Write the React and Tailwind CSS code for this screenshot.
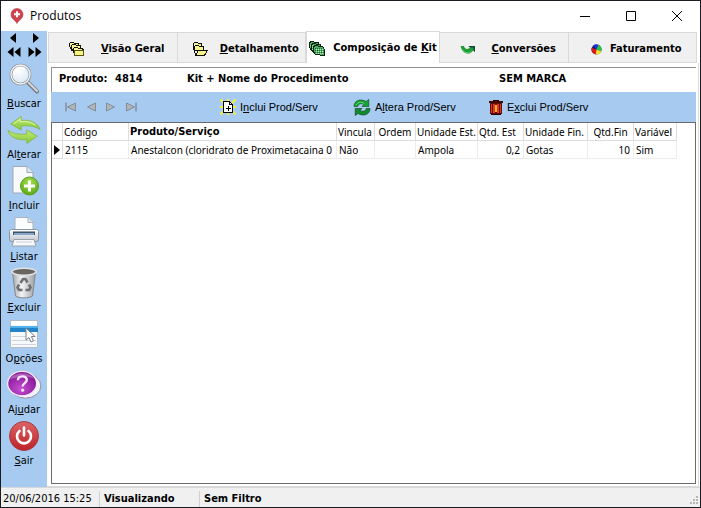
import React from "react";

/* ---------- icons ---------- */

function PinIcon() {
  return (
    <svg width="14" height="16" viewBox="0 0 14 16" aria-hidden="true">
      <path d="M7 15.500C6 12.500 1 11 1 6.500a6 6 0 0 1 12 0C13 11 8 12.500 7 15.500Z" fill="#cf4350" stroke="#b5323f" strokeWidth=".6" />
      <path d="M7 3.200v6M4 6.200h6" stroke="#fff" strokeWidth="2" />
    </svg>
  );
}

function SearchIcon() {
  return (
    <svg width="32" height="32" viewBox="0 0 32 32" aria-hidden="true">
      <defs>
        <radialGradient id="lens" cx=".4" cy=".35" r=".7">
          <stop offset="0" stopColor="#fff" />
          <stop offset="1" stopColor="#d5e6f5" />
        </radialGradient>
      </defs>
      <path d="M20 19.500 29 28.500" stroke="#777b80" strokeWidth="4" strokeLinecap="round" />
      <path d="M20 19 29 28" stroke="#d5d8db" strokeWidth="2" strokeLinecap="round" />
      <circle cx="12.500" cy="11.500" r="9.500" fill="url(#lens)" stroke="#8b8f94" strokeWidth="2.600" />
      <circle cx="12.500" cy="11.500" r="9.500" fill="none" stroke="#f0f1f2" strokeWidth="1.400" />
      <path d="M6 10c1-4 6-6 10-4" stroke="#fff" strokeWidth="2" fill="none" strokeLinecap="round" />
    </svg>
  );
}

function SwapIcon() {
  return (
    <svg width="34" height="28" viewBox="0 0 36 32" preserveAspectRatio="none" aria-hidden="true">
      <defs>
        <linearGradient id="leaf" x1="0" y1="0" x2="0" y2="1">
          <stop offset="0" stopColor="#c3ea78" />
          <stop offset="1" stopColor="#86c834" />
        </linearGradient>
      </defs>
      <path d="M4 9 15 .5v4.500c9-1 17 2 20 10.500-6-4-12-5-20-4V16Z" fill="url(#leaf)" stroke="#7bb53a" strokeWidth=".8" />
      <path d="M32 23 21 31.500V27C12 28 3 25 1 16.500c6 4 12 5 20 4V16Z" fill="url(#leaf)" stroke="#7bb53a" strokeWidth=".8" />
      <path d="M7 9 14 3.800v2.700c7-.8 12 .5 16 4" fill="none" stroke="#e2f7b8" strokeWidth="1" />
    </svg>
  );
}

function AddPageIcon() {
  return (
    <svg width="32" height="32" viewBox="0 0 32 32" aria-hidden="true">
      <defs>
        <radialGradient id="plus" cx=".5" cy=".3" r=".7">
          <stop offset="0" stopColor="#a8df4b" />
          <stop offset="1" stopColor="#59a817" />
        </radialGradient>
      </defs>
      <path d="M5 1.500h14l6 6V28H5Z" fill="#f8fafc" stroke="#9fa9b3" />
      <path d="M19 1.500v6h6" fill="#dfe6ec" stroke="#9fa9b3" />
      <circle cx="21.500" cy="21" r="9" fill="url(#plus)" stroke="#5c9e22" />
      <path d="M21.500 15.500v11M16 21h11" stroke="#fff" strokeWidth="3" />
    </svg>
  );
}

function PrinterIcon() {
  return (
    <svg width="32" height="32" viewBox="0 0 32 32" aria-hidden="true">
      <defs>
        <linearGradient id="prn" x1="0" y1="0" x2="0" y2="1">
          <stop offset="0" stopColor="#fff" />
          <stop offset="1" stopColor="#bfc6cc" />
        </linearGradient>
      </defs>
      <path d="M7 16V1.500h13l5 5V16Z" fill="#fbfcfd" stroke="#aab2ba" />
      <path d="M20 1.500v5h5" fill="#dde4ea" stroke="#aab2ba" />
      <rect x="1.500" y="13.500" width="29" height="12" rx="2" fill="url(#prn)" stroke="#8d97a1" />
      <path d="M5 15.500h22v3.500H5Z" fill="#3f5166" />
      <path d="M6 19h20v-2H6Z" fill="#88a7c8" />
      <path d="M6 23.500h20l2 6.500H4Z" fill="#f6f8fa" stroke="#98a2ac" />
      <path d="M8 26h16" stroke="#ccd3d9" />
    </svg>
  );
}

function BinIcon() {
  return (
    <svg width="32" height="32" viewBox="0 0 32 32" aria-hidden="true">
      <defs>
        <linearGradient id="bin" x1="0" x2="1">
          <stop offset="0" stopColor="#a5a8aa" />
          <stop offset=".4" stopColor="#f3f4f4" />
          <stop offset="1" stopColor="#9a9da0" />
        </linearGradient>
      </defs>
      <path d="M4.500 5h23L24.500 29c-3 2.500-14 2.500-17 0Z" fill="url(#bin)" stroke="#85888b" />
      <ellipse cx="16" cy="4.800" rx="12" ry="3.500" fill="#6a6560" stroke="#dfe1e2" strokeWidth="1.600" />
      <g fill="none" stroke="#6d7073" strokeWidth="2.600">
        <path d="m12.500 16 2.500-4h2.500l2 3.500" />
        <path d="m21 17.500 1.500 3-1.500 2.500h-3.500" />
        <path d="M14.500 23H11l-1.500-2.500 1.500-3" />
      </g>
    </svg>
  );
}

function OptionsIcon() {
  return (
    <svg width="30" height="30" viewBox="0 0 30 30" aria-hidden="true">
      <path d="M1.500 1.500h27v27h-27Z" fill="#f6f8f9" stroke="#b4bcc4" />
      <path d="M2 2h26v4H2Z" fill="#fff" />
      <path d="M1 7h28v6H1Z" fill="#2383c8" />
      <path d="M1 7h28v2H1Z" fill="#4fb0ea" />
      <path d="M3 17.500h24M3 21.500h24M3 25.500h24" stroke="#cfd5da" />
      <path d="M17 9v12l3-2.500 2 4.500 2.400-1.100-2-4.400H26Z" fill="#fff" stroke="#7a8087" strokeWidth="1" />
    </svg>
  );
}

function HelpIcon() {
  return (
    <svg width="38" height="30" viewBox="0 0 38 32" aria-hidden="true">
      <defs>
        <radialGradient id="help" cx=".45" cy=".7" r=".7">
          <stop offset="0" stopColor="#c54fd2" />
          <stop offset="1" stopColor="#7c0f8d" />
        </radialGradient>
      </defs>
      <ellipse cx="20.500" cy="17" rx="16.500" ry="13" fill="#f5f3fa" stroke="#8d8a9b" />
      <ellipse cx="17" cy="14.500" rx="15.500" ry="13" fill="url(#help)" stroke="#f4e9f8" strokeWidth="1.400" />
      <path d="M4 10C8 2 24 1 30 9 22 6 12 7 4 10Z" fill="#fff" opacity=".3" />
      <path d="M12.500 11c0-5.500 9.500-5.500 9.500-.5 0 3.500-4.500 3.500-4.500 7" fill="none" stroke="#f8e6fb" strokeWidth="2.600" />
      <circle cx="17.500" cy="21.500" r="1.700" fill="#f8e6fb" />
    </svg>
  );
}

function PowerIcon() {
  return (
    <svg width="32" height="32" viewBox="0 0 32 32" aria-hidden="true">
      <defs>
        <linearGradient id="pwr" x1="0" y1="0" x2="0" y2="1">
          <stop offset="0" stopColor="#dc6467" />
          <stop offset="1" stopColor="#bd2227" />
        </linearGradient>
      </defs>
      <circle cx="16" cy="16" r="14.500" fill="url(#pwr)" stroke="#a33c42" />
      <path d="M11.500 11a7 7 0 1 0 9 0" fill="none" stroke="#fff" strokeWidth="2.600" strokeLinecap="round" />
      <path d="M16 7.500v8" stroke="#fff" strokeWidth="2.600" strokeLinecap="round" />
    </svg>
  );
}

function FoldersIcon() {
  return (
    <svg width="16" height="15" viewBox="0 0 16 15" shapeRendering="crispEdges" aria-hidden="true">
      <g fill="#f7f38c" stroke="#111">
        <path d="M2.500 8.500l-2-5v-2l1-1h3l1 1h4v7Z" />
        <path d="M4.500 10.500l-2-5v-2l1-1h3l1 1h4v7Z" />
        <path d="M5.500 13.500l-1-5v-2l1-1h3l1 1h4l1 2v5Z" />
      </g>
      <path d="M5.500 8.500h9v5h-9Z" fill="#f7f38c" stroke="#5a5510" />
    </svg>
  );
}

function OpenFolderIcon() {
  return (
    <svg width="16" height="15" viewBox="0 0 16 15" shapeRendering="crispEdges" aria-hidden="true">
      <g fill="#f7f38c" stroke="#111">
        <path d="M1.500 7.500v-6l1-1h3l1 1h3v3l-8 3Z" />
        <path d="M3.500 13.500l-1-5v-4l1-1h3l1 1h4v4h-9" />
        <path d="M3.500 13.500 6.500 8.500h9l-3 5Z" />
      </g>
    </svg>
  );
}

function GreenStackIcon() {
  return (
    <svg width="16" height="15" viewBox="0 0 16 15" shapeRendering="crispEdges" aria-hidden="true">
      <g fill="#4fae62" stroke="#0c2413">
        <path d="M2.500 9.500l-2-3v-4l1-2h3l1 1h4v8Z" />
        <path d="M4.500 11.500l-2-3v-4l1-2h3l1 1h4v8Z" />
        <path d="M6.500 13.500l-2-3v-4l1-2h3l1 1h4l2 3v6Z" />
      </g>
      <path d="M7 8.500h8M7 10.500h8M7 12.500h8" stroke="#b8e6be" strokeDasharray="1 1" />
      <path d="M6 7.500h9M6 9.500h9M6 11.500h9" stroke="#1f6a30" strokeDasharray="1 1" />
      <path d="M1 4.500h3M3 6.500h2M3 8.500h2" stroke="#a8ddb0" strokeDasharray="1 1" />
    </svg>
  );
}

function ConvertIcon() {
  return (
    <svg width="16" height="10" viewBox="0 0 16 10" aria-hidden="true">
      <path d="M.5 1h3.500c.5 3 4 4 6 1.500L8.500 1H15v6l-1.800-1.600C10 10.500 2.500 9.500.5 1Z" fill="#1f9a35" />
      <path d="M8.500 1H15v6l-1.500-1.500V2.500H10Z" fill="#0f4a3c" />
      <path d="M3 5c2 3.500 6 3.500 8.500 1" stroke="#5fd06f" fill="none" />
    </svg>
  );
}

function PieIcon() {
  return (
    <svg width="11" height="11" viewBox="0 0 12 12" aria-hidden="true">
      <circle cx="6" cy="6" r="5.500" fill="#101070" />
      <path d="M6 6 .8 4.200A5.500 5.500 0 0 0 5 11.400Z" fill="#e01818" />
      <path d="M6 6 2 2a5.500 5.500 0 0 1 6-1Z" fill="#2030d8" />
      <path d="M6 6 8 .9a5.500 5.500 0 0 1 3.200 7Z" fill="#28c840" />
      <path d="M6 6 11.200 8A5.500 5.500 0 0 1 5 11.400Z" fill="#f0e030" />
    </svg>
  );
}

function NewDocIcon() {
  return (
    <svg width="16" height="16" viewBox="0 0 16 16" aria-hidden="true">
      <path d="M.5.5 4 4M8 0v3M15.500.5 12 4M0 8h3M13 8h3M.5 15.500 4 12M15.500 15.500 12 12M8 13v3" stroke="#f6f032" strokeWidth="2" />
      <g shapeRendering="crispEdges">
        <path d="M3.500 2.500h6l3 3v8h-9Z" fill="#fff" stroke="#000" />
        <path d="M9.500 2.500v3h3" fill="none" stroke="#000" />
        <path d="M8.500 7v5M6 9.500h5" stroke="#000" />
      </g>
    </svg>
  );
}

function RefreshIcon() {
  return (
    <svg width="18" height="17" viewBox="0 0 18 17" aria-hidden="true">
      <path d="M1 7.500C1 1 8-.5 13 2.500L15.800.5V7.500H9L11 5.300C8 4 5 5 4.800 7.500Z" fill="#14a436" stroke="#0b4a1c" strokeWidth=".6" />
      <path d="M17 9.500c0 6.500-7 8-12 5L2.200 16.500V9.500H9L7 11.700c3 1.300 6 .3 6.200-2.200Z" fill="#118a30" stroke="#0b3a1c" strokeWidth=".6" />
      <path d="M3 6c2-3 5-3.500 8-1.500" fill="none" stroke="#6ede7c" />
    </svg>
  );
}

function TrashIcon() {
  return (
    <svg width="14" height="15" viewBox="0 0 14 15" shapeRendering="crispEdges" aria-hidden="true">
      <path d="M4 0h6v2H4Z" fill="#300" />
      <path d="M0 1h14v2H0Z" fill="#400808" />
      <path d="M1 3h12v11H1Z" fill="#5a1010" />
      <path d="M2 4h1v9H2ZM4 4h2v9H4ZM8 4h2v9H8ZM11 4h1v9h-1Z" fill="#e8321e" />
      <path d="M6 5h2v7H6Z" fill="#f4b428" />
      <path d="M2 14h10v1H2Z" fill="#300" />
    </svg>
  );
}

/* Record navigation triangle, optionally with an end bar */
function NavGlyph({ flip, bar }) {
  return (
    <svg width="12" height="10" viewBox="0 0 12 10" className={flip ? "-scale-x-100" : ""} aria-hidden="true">
      <path d="M10.500 1v8L2.500 5Z" fill="#b0b5ba" stroke="#7f868d" strokeWidth=".9" />
      {bar && <path d="M1 .5v9" stroke="#7f868d" strokeWidth="1.300" />}
    </svg>
  );
}

function Arrow({ flip, double: dbl }) {
  return (
    <svg width="14" height="10" viewBox="0 0 14 10" className={flip ? "-scale-x-100" : ""} aria-hidden="true">
      {dbl ? <path d="M6.500 0v10L.5 5ZM13.500 0v10l-6-5Z" /> : <path d="M9 0v10L3 5Z" />}
    </svg>
  );
}

/* ---------- data ---------- */

const sideItems = [
  { label: <><u>B</u>uscar</>, icon: <SearchIcon /> },
  { label: <>Al<u>t</u>erar</>, icon: <SwapIcon /> },
  { label: <><u>I</u>ncluir</>, icon: <AddPageIcon /> },
  { label: <><u>L</u>istar</>, icon: <PrinterIcon /> },
  { label: <><u>E</u>xcluir</>, icon: <BinIcon /> },
  { label: <>O<u>p</u>ções</>, icon: <OptionsIcon /> },
  { label: <>Aj<u>u</u>dar</>, icon: <HelpIcon /> },
  { label: <><u>S</u>air</>, icon: <PowerIcon /> },
];

const tabs = [
  { label: <><u>V</u>isão Geral</>, icon: <FoldersIcon />, gap: "gap-4" },
  { label: <><u>D</u>etalhamento</>, icon: <OpenFolderIcon />, gap: "gap-3" },
  { label: <>Composição de <u>K</u>it</>, icon: <GreenStackIcon />, gap: "gap-2", active: true },
  { label: <><u>C</u>onversões</>, icon: <ConvertIcon />, gap: "gap-4" },
  { label: "Faturamento", icon: <PieIcon />, gap: "gap-2" },
];

const columns = [
  { title: "Código", width: "w-[66px]", value: "2115" },
  { title: "Produto/Serviço", width: "w-[208px]", value: "Anestalcon (cloridrato de Proximetacaina 0", bold: true },
  { title: "Vincula", width: "w-[38px]", value: "Não" },
  { title: "Ordem", width: "w-[41px]", value: "", center: true },
  { title: "Unidade Est.", width: "w-[62px]", value: "Ampola" },
  { title: "Qtd. Est", width: "w-[46px]", value: "0,2", right: true },
  { title: "Unidade Fin.", width: "w-[64px]", value: "Gotas" },
  { title: "Qtd.Fin", width: "w-[46px]", value: "10", right: true, center: true },
  { title: "Variável", width: "w-[43px]", value: "Sim" },
];

/* ---------- parts ---------- */

function TitleBar() {
  return (
    <header className="flex h-[30px] items-center bg-white pl-[9px] font-['Open_Sans',sans-serif] text-xs">
      <PinIcon />
      <h1 className="ml-[6px] flex-1">Produtos</h1>
      <button aria-label="Minimizar" className="flex h-full w-[46px] items-center justify-center">
        <svg width="10" height="10" viewBox="0 0 10 10"><path d="M0 5.500h10" stroke="#000" /></svg>
      </button>
      <button aria-label="Maximizar" className="flex h-full w-[46px] items-center justify-center">
        <svg width="10" height="10" viewBox="0 0 10 10"><path d="M.500 .500h9v9h-9Z" fill="none" stroke="#000" /></svg>
      </button>
      <button aria-label="Fechar" className="flex h-full w-[46px] items-center justify-center">
        <svg width="10" height="10" viewBox="0 0 10 10"><path d="m0 0 10 10M10 0 0 10" stroke="#000" /></svg>
      </button>
    </header>
  );
}

function Sidebar() {
  return (
    <nav className="flex w-[46px] shrink-0 flex-col bg-[#a6caf0]">
      <div className="grid grid-cols-2 justify-items-center gap-y-1 px-[2px] pb-[6px] pt-[2px]">
        <button aria-label="Anterior"><Arrow /></button>
        <button aria-label="Próximo"><Arrow flip /></button>
        <button aria-label="Primeiro"><Arrow double /></button>
        <button aria-label="Último"><Arrow double flip /></button>
      </div>
      {sideItems.map((item, i) => (
        <button key={i} className="flex h-[51px] flex-col items-center gap-px">
          <span className="flex h-8 items-center">{item.icon}</span>
          <span className="leading-4">{item.label}</span>
        </button>
      ))}
    </nav>
  );
}

function Tabs() {
  return (
    <div role="tablist" className="flex h-8 items-end pl-px pr-[3px] font-bold">
      {tabs.map((tab, i) => (
        <button
          key={i}
          role="tab"
          aria-selected={!!tab.active}
          className={
            "flex items-center justify-center whitespace-nowrap border-[#d9d9d9] " +
            tab.gap +
            (tab.active
              ? " h-8 w-[134px] border-x border-t bg-white pt-[2px]"
              : " h-[31px] flex-1 border-b border-r border-t bg-[#f0f0f0] pl-2 pt-1 first:border-l")
          }
        >
          {tab.icon}
          <span>{tab.label}</span>
        </button>
      ))}
    </div>
  );
}

function Toolbar() {
  return (
    <div role="toolbar" className="flex h-[30px] items-center bg-[#a6caf0] pl-[14px] font-['Liberation_Sans',Arial,sans-serif]">
      <div className="flex w-[155px] gap-2">
        <button aria-label="Primeiro registro"><NavGlyph bar /></button>
        <button aria-label="Registro anterior"><NavGlyph /></button>
        <button aria-label="Próximo registro"><NavGlyph flip /></button>
        <button aria-label="Último registro"><NavGlyph bar flip /></button>
      </div>
      <button className="flex w-[133px] items-center gap-1">
        <NewDocIcon />
        <span>I<u>n</u>clui Prod/Serv</span>
      </button>
      <button className="flex w-[136px] items-center gap-1">
        <RefreshIcon />
        <span>A<u>l</u>tera Prod/Serv</span>
      </button>
      <button className="flex items-center gap-1">
        <TrashIcon />
        <span>E<u>x</u>clui Prod/Serv</span>
      </button>
    </div>
  );
}

function Grid() {
  const cell = "overflow-hidden whitespace-nowrap border-b border-r ";
  return (
    <div className="flex-1 border border-[#6b6b6b] bg-white">
      <table className="w-[625px] table-fixed border-separate border-spacing-0 font-['Noto_Sans',sans-serif] text-[10px] leading-4">
        <thead>
          <tr className="h-[18px]">
            <th className="w-[11px] border-b border-r border-[#dcdcdc]" aria-label="Registro atual" />
            {columns.map((c) => (
              <th
                key={c.title}
                className={
                  cell + c.width + " border-[#dcdcdc] " +
                  (c.center ? "text-center " : "pl-px text-left ") +
                  (c.bold ? "font-['DejaVu_Sans_Condensed',sans-serif] text-[11px] font-bold" : "font-normal")
                }
              >
                {c.title}
              </th>
            ))}
          </tr>
        </thead>
        <tbody>
          <tr className="h-[18px]">
            <td className="border-b border-r border-[#dcdcdc]">
              <svg width="7" height="10" viewBox="0 0 7 10" className="ml-[2px]" aria-hidden="true"><path d="M0 0v10l6-5Z" /></svg>
            </td>
            {columns.map((c) => (
              <td key={c.title} className={cell + "border-[#ececec] " + (c.right ? "pr-[3px] text-right" : "pl-[2px]")}>
                {c.value}
              </td>
            ))}
          </tr>
        </tbody>
      </table>
    </div>
  );
}

function StatusBar() {
  return (
    <footer className="flex h-5 items-center border-t border-[#d7d7d7] bg-[#f0f0f0] pt-[2px]">
      <span className="w-[99px] border-r border-[#d0d0d0] pl-[2px] leading-4">20/06/2016 15:25</span>
      <b className="w-[100px] border-r border-[#d0d0d0] pl-1 leading-4">Visualizando</b>
      <b className="flex-1 pl-1 leading-4">Sem Filtro</b>
      <svg width="9" height="9" viewBox="0 0 9 9" className="mr-px mt-1" aria-hidden="true">
        <path d="M6 0h2v2H6ZM3 3h2v2H3ZM6 3h2v2H6ZM0 6h2v2H0ZM3 6h2v2H3ZM6 6h2v2H6Z" fill="#b8b8b8" />
      </svg>
    </footer>
  );
}

export default function App() {
  return (
    <div className="flex min-h-screen flex-col border border-[#1b1b22] bg-white font-['DejaVu_Sans_Condensed','DejaVu_Sans',sans-serif] text-[11px] text-black">
      <TitleBar />
      <div className="flex flex-1">
        <Sidebar />
        <main className="flex min-w-0 flex-1 flex-col">
          <Tabs />
          <section className="mr-px flex flex-1 flex-col border-b border-r border-[#d9d9d9] pb-[2px] pl-1 pr-[2px] pt-1">
            <div className="flex h-[25px] items-center border-l border-t border-[#8f8f8f] pb-[2px] pl-[7px] font-bold">
              <span className="w-14">Produto:</span>
              <span className="w-[72px]">4814</span>
              <span className="w-[312px]">Kit + Nome do Procedimento</span>
              <span>SEM MARCA</span>
            </div>
            <Toolbar />
            <Grid />
          </section>
        </main>
      </div>
      <StatusBar />
    </div>
  );
}
